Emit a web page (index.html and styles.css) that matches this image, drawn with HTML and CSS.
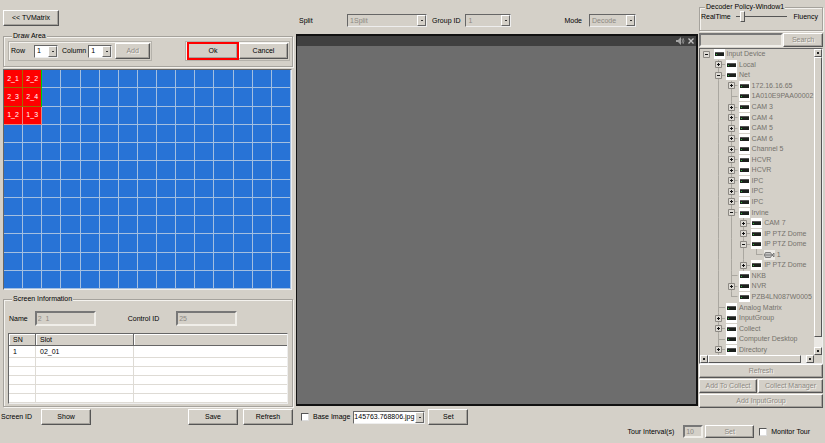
FILE: index.html
```html
<!DOCTYPE html>
<html lang="en">
<head>
    <meta charset="UTF-8">
    <title>TV Matrix</title>
    <link rel="stylesheet" href="styles.css">
</head>
<body>
    <main>
        <section class="left">
            <div class="left-top">
                <button type="button">&lt;&lt; TVMatrix</button>
            </div>

            <fieldset class="draw-area">
                <legend>Draw Area</legend>
                <div class="tool-box">
                    <label for="row">Row</label>
                    <span class="combo"><select id="row"><option>1</option></select></span>
                    <label for="column">Column</label>
                    <span class="combo"><select id="column"><option>1</option></select></span>
                    <button type="button" disabled>Add</button>
                </div>
                <div class="tool-box confirm">
                    <button type="button" class="ok">Ok</button>
                    <button type="button">Cancel</button>
                </div>
            </fieldset>

            <div class="wall" id="wall"></div>

            <fieldset class="screen-info">
                <legend>Screen Information</legend>
                <div class="info-row">
                    <label for="name">Name</label>
                    <input type="text" id="name" value="2_1" disabled>
                    <label for="control_id" class="control-label">Control ID</label>
                    <input type="text" id="control_id" value="25" disabled>
                </div>
                <table>
                    <thead>
                        <tr><th class="col-sn">SN</th><th class="col-slot">Slot</th><th></th></tr>
                    </thead>
                    <tbody>
                        <tr><td>1</td><td>02_01</td><td></td></tr>
                        <tr><td></td><td></td><td></td></tr>
                        <tr><td></td><td></td><td></td></tr>
                        <tr><td></td><td></td><td></td></tr>
                        <tr><td></td><td></td><td></td></tr>
                        <tr><td></td><td></td><td></td></tr>
                    </tbody>
                </table>
            </fieldset>

            <div class="left-bottom">
                <span>Screen ID</span>
                <button type="button">Show</button>
                <button type="button" class="save">Save</button>
                <button type="button">Refresh</button>
            </div>
        </section>

        <section class="middle">
            <div class="middle-top">
                <label for="split">Split</label>
                <span class="combo split"><select id="split" disabled><option>1Split</option></select></span>
                <label for="group">Group ID</label>
                <span class="combo group"><select id="group" disabled><option>1</option></select></span>
                <label for="mode" class="mode-label">Mode</label>
                <span class="combo mode"><select id="mode" disabled><option>Decode</option></select></span>
            </div>
            <div class="screen">
                <div class="screen-bar">
                    <svg width="9" height="8" viewBox="0 0 9 8">
                        <path d="M0 3h2l3-3v8L2 5H0z" fill="#a4a4a4"/>
                        <path d="M6 2q1 2 0 4M7 1q2 3 0 6" fill="none" stroke="#888"/>
                    </svg>
                    <svg width="6" height="6" viewBox="0 0 6 6">
                        <path d="M0.5 0.5l5 5M5.5 0.5l-5 5" stroke="#c4c4c4" stroke-width="1.3"/>
                    </svg>
                </div>
            </div>
            <div class="middle-bottom">
                <input type="checkbox" id="base_image">
                <label for="base_image">Base Image</label>
                <span class="combo file"><select aria-label="Image file"><option>145763.768806.jpg</option></select></span>
                <button type="button">Set</button>
            </div>
        </section>

        <section class="right">
            <fieldset class="policy">
                <legend>Decoder Policy-Window1</legend>
                <label for="policy">RealTime</label>
                <input type="range" id="policy" min="0" max="10" value="1">
                <span>Fluency</span>
            </fieldset>
            <div class="search">
                <input type="text" aria-label="Search device" disabled>
                <button type="button" disabled>Search</button>
            </div>
            <div class="tree-box">
                <ul class="tree" id="tree"></ul>
                <div class="bar-v"><i class="up"></i><b></b><i class="down"></i></div>
                <div class="bar-h"><i class="prev"></i><b></b><i class="next"></i></div>
            </div>
            <div class="device-buttons">
                <button type="button" class="wide" disabled>Refresh</button>
                <button type="button" disabled>Add To Collect</button>
                <button type="button" disabled>Collect Manager</button>
                <button type="button" class="wide" disabled>Add InputGroup</button>
            </div>
        </section>
    </main>

    <footer>
        <label for="interval">Tour Interval(s)</label>
        <input type="text" id="interval" value="10" disabled>
        <button type="button" disabled>Set</button>
        <input type="checkbox" id="monitor_tour">
        <label for="monitor_tour">Monitor Tour</label>
    </footer>

    <script src="script.js"></script>
</body>
</html>
```

FILE: styles.css
```css
* {
    box-sizing: border-box;
}

body {
    font-family: "Liberation Sans", Arial, sans-serif;
    font-size: 7px;
    line-height: 10px;
    color: #000;
    background-color: #d4d0c8;
    margin: 0;
    min-height: 100vh;
    display: flex;
    flex-direction: column;
}

main {
    flex: 1;
    display: grid;
    grid-template-columns: minmax(0, 294fr) minmax(0, 404fr) minmax(0, 127fr);
}

section {
    display: flex;
    flex-direction: column;
    min-width: 0;
}

label, span {
    white-space: nowrap;
}

button, input, select {
    font: inherit;
    color: inherit;
    margin: 0;
    border-radius: 0;
}

button {
    height: 16px;
    padding: 0;
    background-color: #d4d0c8;
    border: 1px solid;
    border-color: #fff #555 #555 #fff;
    box-shadow: inset -1px -1px #a5a29c;
    white-space: nowrap;
}

button:disabled {
    color: #8c8983;
    text-shadow: 1px 1px #f4f2ee;
}

input[type="text"] {
    height: 15px;
    padding: 0 1px 1px;
    background-color: #fff;
    border: 2px solid;
    border-color: #777 #f0eee9 #f0eee9 #777;
    min-width: 0;
}

input[type="text"]:disabled {
    background-color: #d4d0c8;
    color: #8c8983;
}

input[type="checkbox"] {
    appearance: none;
    width: 8px;
    height: 8px;
    background-color: #fff;
    border: 1px solid;
    border-color: #555 #ddd #ddd #555;
}

fieldset {
    margin: 0;
    padding: 0;
    min-width: 0;
    border: 1px solid #a5a29c;
    box-shadow: 1px 1px #f4f2ee, inset 1px 1px #f4f2ee;
}

legend {
    margin-left: 4px;
    padding: 0 1px;
    line-height: 8px;
    background-color: #d4d0c8;
}

/* drop-downs */
.combo {
    position: relative;
    display: inline-block;
    width: 24px;
    height: 13px;
}

.combo select {
    appearance: none;
    display: block;
    width: 100%;
    height: 100%;
    padding: 0 0 0 2px;
    background-color: #fff;
    border: 1px solid;
    border-color: #666 #eee #eee #666;
    opacity: 1;
}

.combo select:disabled {
    background-color: #d4d0c8;
    color: #8c8983;
}

.combo::after {
    content: "";
    position: absolute;
    top: 1px;
    right: 1px;
    bottom: 1px;
    width: 7px;
    border: 1px solid;
    border-color: #fff #666 #666 #fff;
    background: linear-gradient(#333, #333) center / 2px 1px no-repeat #d4d0c8;
    pointer-events: none;
}

/* left side */
.left {
    padding: 0 1px 0 3px;
}

.left-top {
    padding: 10px 0 6px;
}

.left-top button {
    width: 56px;
}

.draw-area {
    display: flex;
    justify-content: space-between;
    padding: 1px 2px 5px 4px;
}

.tool-box {
    display: flex;
    align-items: center;
    height: 20px;
    padding: 0 1px;
    border: 1px solid #b5b2ab;
    box-shadow: inset 1px 1px #f4f2ee;
}

.tool-box label {
    margin: 0 2px 0 4px;
}

.tool-box label:first-child {
    margin: 0 9px 0 1px;
}

.tool-box > button {
    width: 35px;
    margin-left: 3px;
}

.confirm > button {
    width: 49px;
    margin: 0;
}

.confirm > .ok {
    width: 52px;
    height: 18px;
    outline: 2px solid #f00;
    outline-offset: -2px;
    border-width: 2px;
}

.wall {
    flex: 1;
    display: grid;
    grid-template-columns: repeat(15, 1fr);
    grid-template-rows: repeat(12, 1fr);
    margin: 2px 1px 5px 0;
    border: 1px solid;
    border-color: #666 #eee #eee #666;
}

.cell {
    background-color: #2873d6;
    border-right: 1px solid #a4bfe0;
    border-bottom: 1px solid #a4bfe0;
    color: #fff;
    display: flex;
    align-items: center;
    justify-content: center;
}

.cell.used {
    background-color: #f00;
    border-color: #e58a80;
}

.cell.picked {
    border-color: #a06a00;
}

.cell.edge {
    border-right-color: #0c0;
}

.screen-info {
    padding: 8px 4px 2px;
}

.info-row {
    display: flex;
    align-items: center;
    margin-bottom: 7px;
    padding-left: 1px;
}

.info-row input {
    width: 61px;
    margin-left: 7px;
}

.info-row .control-label {
    margin-left: 32px;
}

.info-row .control-label + input {
    margin-left: 17px;
}

table {
    width: 100%;
    table-layout: fixed;
    border-collapse: separate;
    border-spacing: 0;
    background-color: #fff;
    border: 1px solid;
    border-color: #666 #eee #eee #666;
}

th, td {
    height: 9px;
    padding: 0 4px;
    font-weight: normal;
    text-align: left;
    line-height: 8px;
    border-right: 1px solid #dedbd5;
    border-bottom: 1px solid #dedbd5;
}

th {
    height: 12px;
    background-color: #d4d0c8;
    border-color: #666;
    box-shadow: inset 1px 1px #fff;
}

tbody tr:first-child td {
    height: 12px;
}

th:last-child, td:last-child {
    border-right: none;
}

.col-sn {
    width: 27px;
}

.col-slot {
    width: 98px;
}

.left-bottom {
    display: flex;
    align-items: center;
    margin-top: 2px;
    margin-left: -2px;
}

.left-bottom button {
    width: 50px;
    margin-left: 5px;
}

.left-bottom span + button {
    margin-left: 9px;
}

.left-bottom .save {
    margin-left: auto;
}

/* middle */
.middle {
    padding-left: 2px;
}

.middle-top {
    display: flex;
    align-items: center;
    height: 34px;
    padding: 7px 62px 0 3px;
}

.split {
    width: 80px;
    margin: 0 5px 0 auto;
}

.group {
    width: 46px;
    margin-left: 5px;
}

.mode-label {
    margin-left: 53px;
}

.mode {
    width: 47px;
    margin-left: 7px;
}

.screen {
    flex: 1;
    background-color: #6d6d6d;
    border: 2px solid #111;
    border-left-width: 1px;
}

.screen-bar {
    display: flex;
    justify-content: flex-end;
    align-items: center;
    gap: 3px;
    height: 10px;
    padding-right: 2px;
    background-color: #404040;
}

.middle-bottom {
    display: flex;
    align-items: center;
    margin-top: 3px;
    padding-left: 5px;
}

.middle-bottom label {
    margin: 0 3px 0 4px;
}

.middle-bottom button {
    width: 40px;
    margin-left: 3px;
}

.file {
    width: 72px;
}

.file select {
    padding-left: 0;
}

/* device side */
.right {
    padding: 3px 2px 0 1px;
}

.policy {
    display: flex;
    align-items: center;
    height: 28px;
    padding: 0 4px 0 1px;
}

.policy input {
    appearance: none;
    flex: 1;
    min-width: 0;
    height: 11px;
    margin: 0 6px 0 5px;
    background: linear-gradient(#555, #555) center / 100% 1px no-repeat;
}

.policy input::-webkit-slider-thumb {
    appearance: none;
    width: 5px;
    height: 11px;
    background-color: #d4d0c8;
    border: 1px solid;
    border-color: #fff #555 #555 #fff;
}

.search {
    display: flex;
    margin: 2px 0 1px;
}

.search input {
    flex: 1;
    height: 14px;
}

.search button {
    width: 40px;
    height: 14px;
}

.tree-box {
    flex: 1;
    display: grid;
    grid-template-columns: minmax(0, 1fr) 8px;
    grid-template-rows: minmax(0, 1fr) 8px;
    border: 1px solid;
    border-color: #666 #eee #eee #666;
}

.tree {
    display: grid;
    grid-auto-rows: 1fr;
    margin: 0;
    padding: 0;
    list-style: none;
    overflow: hidden;
    color: #75726c;
}

.tree li {
    display: flex;
    align-items: center;
    min-height: 0;
}

.tree i {
    flex: none;
    width: 11%;
    height: 100%;
    display: flex;
    align-items: center;
    justify-content: center;
}

.tree .line {
    background: linear-gradient(#aaa7a0, #aaa7a0) center / 1px 100% no-repeat;
}

.tree .leaf {
    background: linear-gradient(#aaa7a0, #aaa7a0) center / 1px 100% no-repeat,
        linear-gradient(#aaa7a0, #aaa7a0) right / 50% 1px no-repeat;
}

.tree .last {
    background: linear-gradient(#aaa7a0, #aaa7a0) top / 1px 50% no-repeat,
        linear-gradient(#aaa7a0, #aaa7a0) right / 50% 1px no-repeat;
}

.tree svg {
    flex: none;
}

.tree span {
    margin-left: 2px;
}

.bar-v, .bar-h {
    display: flex;
    background-color: #eae8e4;
}

.bar-v {
    flex-direction: column;
}

.bar-v b, .bar-h b, .bar-v i, .bar-h i {
    background-color: #d4d0c8;
    border: 1px solid;
    border-color: #fff #555 #555 #fff;
}

.bar-v i, .bar-h i {
    width: 8px;
    height: 8px;
    background: linear-gradient(#222, #222) center / 2px 2px no-repeat #d4d0c8;
}

.bar-v b {
    flex: 1;
    margin-bottom: 10px;
}

.bar-h b {
    flex: 1;
    margin-right: 5px;
}

.device-buttons {
    display: grid;
    grid-template-columns: minmax(0, 58fr) minmax(0, 65fr);
    gap: 1px;
    margin-bottom: 17px;
}

.device-buttons button {
    height: 14px;
}

.device-buttons .wide {
    grid-column: span 2;
}

footer {
    display: flex;
    align-items: center;
    justify-content: flex-end;
    height: 18px;
    padding: 0 15px 5px 0;
}

footer input[type="text"] {
    width: 20px;
    height: 13px;
    margin: 0 2px 0 9px;
}

footer button {
    width: 49px;
    height: 13px;
    margin-right: 5px;
}

footer input[type="checkbox"] {
    margin-right: 4px;
}
```

FILE: script.js
```js
const COLUMNS = 15;
const ROWS = 12;
const screens = [['2_1', '2_2'], ['2_3', '2_4'], ['1_2', '1_3']];

const wall = document.getElementById('wall');
for (let row = 0; row < ROWS; row++) {
    for (let col = 0; col < COLUMNS; col++) {
        const cell = document.createElement('div');
        cell.className = 'cell';
        if (screens[row] && screens[row][col]) {
            cell.textContent = screens[row][col];
            cell.classList.add('used');
            if (row < 2) {
                cell.classList.add('picked');
                if (col === 1) cell.classList.add('edge');
            }
        }
        wall.appendChild(cell);
    }
}

// one device per entry: the guide lines and toggle before it, then its name
// | line, . blank, + closed, - open, t leaf, l last leaf
const devices = [
    ['-', 'Input Device'],
    ['.+', 'Local'],
    ['.-', 'Net'],
    ['.|+', '172.16.16.65'],
    ['.|t', '1A010E9PAA00002'],
    ['.|+', 'CAM 3'],
    ['.|+', 'CAM 4'],
    ['.|+', 'CAM 5'],
    ['.|+', 'CAM 6'],
    ['.|+', 'Channel 5'],
    ['.|+', 'HCVR'],
    ['.|+', 'HCVR'],
    ['.|+', 'IPC'],
    ['.|+', 'IPC'],
    ['.|+', 'IPC'],
    ['.|-', 'Irvine'],
    ['.||+', 'CAM 7'],
    ['.||+', 'IP PTZ Dome'],
    ['.||-', 'IP PTZ Dome'],
    ['.|||l', '1', 'camera'],
    ['.||+', 'IP PTZ Dome'],
    ['.|t', 'NKB'],
    ['.|+', 'NVR'],
    ['.|l', 'PZB4LN087W0005'],
    ['.t', 'Analog Matrix'],
    ['.+', 'InputGroup'],
    ['.+', 'Collect'],
    ['.t', 'Computer Desktop'],
    ['.+', 'Directory']
];

const classes = { '|': 'line', '.': '', '+': 'leaf', '-': 'leaf', 't': 'leaf', 'l': 'last' };

const deviceIcon = `<svg width="12" height="10" viewBox="0 0 12 10">
    <path d="M1 0h11v10H1z" fill="#fff"/>
    <path d="M2 3h9v4H2z" fill="#1c201d"/>
    <path d="M2 3.500h9" stroke="#555"/>
    <path d="M3 5.500h1" stroke="#2cba3c"/></svg>`;

const cameraIcon = `<svg width="12" height="10" viewBox="0 0 12 10">
    <path d="M1 0h11v10H1z" fill="#eceae6"/>
    <path d="M2.500 2.500h5l1.500 2.500-1.500 2.500h-5L1.300 5zM9 5l2-2v4zM2 5h6" fill="#c5c5c5" stroke="#666" stroke-width=".8"/></svg>`;

function toggle(open) {
    return `<svg width="7" height="7" viewBox="0 0 7 7">
        <path d="M.5.5h6v6h-6z" fill="#dedbd5" stroke="#8c8983"/>
        <path d="M2 3.500h3${open ? '' : 'M3.500 2v3'}" stroke="#111"/></svg>`;
}

const tree = document.getElementById('tree');
devices.forEach(([guides, name, kind]) => {
    const item = document.createElement('li');
    item.innerHTML = [...guides].map(g => {
        const icon = g === '+' || g === '-' ? toggle(g === '-') : '';
        return `<i class="${guides.length === 1 ? '' : classes[g]}">${icon}</i>`;
    }).join('') + (kind === 'camera' ? cameraIcon : deviceIcon);
    const label = document.createElement('span');
    label.textContent = name;
    item.appendChild(label);
    tree.appendChild(item);
});
```
